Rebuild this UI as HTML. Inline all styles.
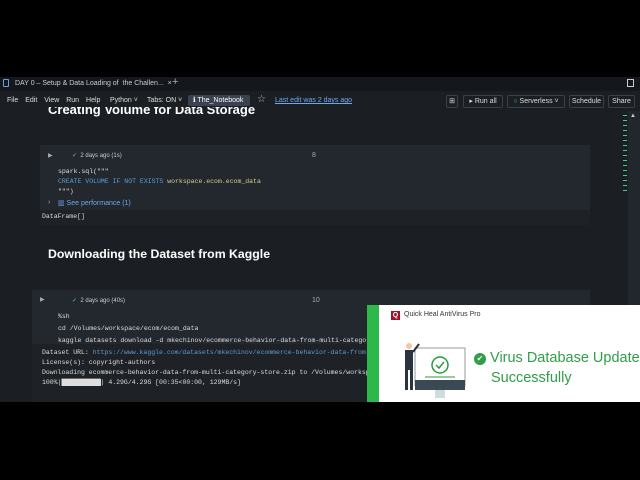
<!DOCTYPE html>
<html><head><meta charset="utf-8"><style>
*{margin:0;padding:0;box-sizing:border-box}
body{width:640px;height:480px;background:#000;position:relative;overflow:hidden;font-family:"Liberation Sans",sans-serif;color:#ccc}
.a{position:absolute}
.mono{font-family:"Liberation Mono",monospace}
.btn{position:absolute;top:95px;height:13px;border:1px solid #3a4048;border-radius:2px;font-size:7px;color:#ddd;line-height:11px;text-align:center}
</style></head><body>
<div class="a" style="left:0;top:77px;width:640px;height:14px;background:#14171b"></div>
<div class="a" style="left:0;top:91px;width:640px;height:311px;background:#1b1f24"></div>
<div class="a" style="left:0;top:107px;width:300px;height:11px;overflow:hidden"><div style="position:absolute;left:48px;top:-5px;font-size:13px;font-weight:bold;color:#fff;line-height:16px;white-space:nowrap">Creating Volume for Data Storage</div></div>
<div class="a" style="left:3px;top:79px;width:6px;height:8px;border:1px solid #6aa0e0;border-radius:1px"></div>
<div class="a" style="left:15px;top:78px;font-size:7px;color:#ccc;line-height:11px">DAY 0 – Setup &amp; Data Loading of &nbsp;the Challen... &nbsp;×</div>
<div class="a" style="left:172px;top:76px;font-size:11px;color:#aaa">+</div>
<div class="a" style="left:627px;top:79px;width:7px;height:8px;border:1px solid #ccc"></div>
<div class="a" style="left:7px;top:97px;font-size:7px;color:#ddd;word-spacing:5px">File Edit View Run Help</div>
<div class="a" style="left:110px;top:97px;font-size:7px;color:#ddd">Python ˅</div>
<div class="a" style="left:147px;top:97px;font-size:7px;color:#ddd">Tabs: ON ˅</div>
<div class="a" style="left:188px;top:95px;width:62px;height:11px;background:#3a4250;border-radius:2px;font-size:7px;color:#fff;line-height:11px;padding-left:5px">ℹ The_Notebook</div>
<div class="a" style="left:257px;top:94px;font-size:10px;color:#bbb">☆</div>
<div class="a" style="left:275px;top:97px;font-size:7px;color:#6ea8e8;text-decoration:underline">Last edit was 2 days ago</div>
<div class="btn" style="left:446px;width:12px">⊞</div>
<div class="btn" style="left:463px;width:40px">▸ Run all</div>
<div class="btn" style="left:507px;width:58px"><span style="color:#5c5">○</span> Serverless ˅</div>
<div class="btn" style="left:569px;width:35px">Schedule</div>
<div class="btn" style="left:608px;width:27px">Share</div>
<div class="a" style="left:628px;top:111px;width:12px;height:291px;background:#22272d"></div>
<div class="a" style="left:630px;top:113px;font-size:6px;color:#ccc">▲</div>
<div class="a" style="left:623px;top:115px;width:4px;height:80px;background:repeating-linear-gradient(#4c8 0 1px,transparent 1px 5px)"></div>
<!-- cell1 -->
<div class="a" style="left:40px;top:145px;width:550px;height:80px;background:#23282e"></div>
<div class="a" style="left:40px;top:210px;width:550px;height:15px;background:#1e2227"></div>
<div class="a" style="left:48px;top:152px;font-size:6px;color:#aaa">▶</div>
<div class="a" style="left:72px;top:152px;font-size:6px;color:#ccc"><span style="color:#6c8">✓</span> &nbsp;2 days ago (1s)</div>
<div class="a" style="left:312px;top:152px;font-size:7px;color:#aaa">8</div>
<div class="a mono" style="left:58px;top:167px;font-size:6.5px;line-height:10px;color:#ddd">spark.sql("""<br><span style="color:#5b9bd5">CREATE VOLUME IF NOT EXISTS</span> <span style="color:#d8c890">workspace.ecom.ecom_data</span><br>""")</div>
<div class="a" style="left:48px;top:199px;font-size:7px;color:#aaa">›</div>
<div class="a" style="left:58px;top:199px;font-size:7px;color:#6ea8e8">▥ See performance (1)</div>
<div class="a mono" style="left:42px;top:213px;font-size:6.5px;color:#ddd">DataFrame[]</div>
<div class="a" style="left:48px;top:247px;font-size:12.3px;font-weight:bold;color:#fff">Downloading the Dataset from Kaggle</div>
<!-- cell2 -->
<div class="a" style="left:32px;top:290px;width:558px;height:112px;background:#23282e"></div>
<div class="a" style="left:32px;top:344px;width:558px;height:58px;background:#1e2227"></div>
<div class="a" style="left:40px;top:296px;font-size:6px;color:#aaa">▶</div>
<div class="a" style="left:72px;top:297px;font-size:6px;color:#ccc"><span style="color:#6c8">✓</span> &nbsp;2 days ago (40s)</div>
<div class="a" style="left:312px;top:297px;font-size:7px;color:#aaa">10</div>
<div class="a mono" style="left:58px;top:311px;font-size:6.5px;line-height:12px;color:#ddd;white-space:nowrap">%sh<br>cd /Volumes/workspace/ecom/ecom_data<br>kaggle datasets download -d mkechinov/ecommerce-behavior-data-from-multi-category-store</div>
<div class="a mono" style="left:42px;top:348px;font-size:6.5px;line-height:10px;color:#ddd;white-space:nowrap">Dataset URL: <span style="color:#5b9bd5">https://www.kaggle.com/datasets/mkechinov/ecommerce-behavior-data-from-multi</span><br>License(s): copyright-authors<br>Downloading ecommerce-behavior-data-from-multi-category-store.zip to /Volumes/workspace/e<br>100%|<span style="background:#ddd;color:#ddd">██████████</span>| 4.29G/4.29G [00:35&lt;00:00, 129MB/s]</div>
<!-- popup -->
<div class="a" style="left:367px;top:305px;width:273px;height:97px;background:#fff;overflow:hidden">
<div class="a" style="left:0;top:0;width:12px;height:97px;background:#2db84a"></div>
<div class="a" style="left:24px;top:6px;width:9px;height:9px;background:#a0102a;color:#fff;font-size:7px;font-weight:bold;text-align:center;line-height:9px">Q</div>
<div class="a" style="left:37px;top:6px;font-size:7px;color:#333">Quick Heal AntiVirus Pro</div>
<svg class="a" style="left:28px;top:35px" width="75" height="62">
<rect x="20" y="8" width="50" height="38" fill="#fff" stroke="#999" stroke-width="1"/>
<rect x="20" y="40" width="50" height="10" fill="#3b4a52"/>
<rect x="40" y="50" width="10" height="8" fill="#cdd"/>
<circle cx="45" cy="25" r="8" fill="none" stroke="#2a9a3a" stroke-width="1.5"/>
<path d="M41 25l3 3 5-6" fill="none" stroke="#2a9a3a" stroke-width="1.5"/>
<line x1="30" y1="37" x2="60" y2="37" stroke="#2a9a3a" stroke-width="1"/>
<circle cx="14" cy="6" r="3" fill="#f0c8a0"/>
<path d="M10 10h8v20h-8z" fill="#2c3340"/>
<path d="M10 30h3v20h-3zM15 30h3v20h-3z" fill="#2c3340"/>
<path d="M18 12l6-8" stroke="#2c3340" stroke-width="2"/>
</svg>
<div class="a" style="left:107px;top:43px;font-size:14.5px;color:#2e9e48;line-height:20px;white-space:nowrap"><span style="display:inline-block;width:12px;height:12px;border-radius:50%;background:#2e9e48;color:#fff;font-size:8px;text-align:center;line-height:12px;vertical-align:1px">✔</span> Virus Database Updated<br><span style="padding-left:17px">Successfully</span></div>
</div>
<div class="a" style="left:0;top:402px;width:640px;height:78px;background:#000"></div>
</body></html>
